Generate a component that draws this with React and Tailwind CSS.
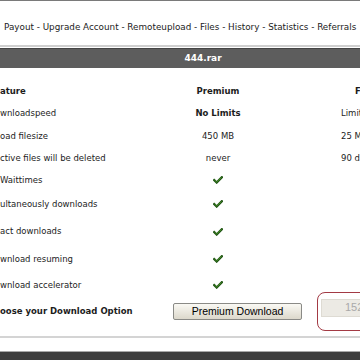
import React from "react";

const rows = [
  { label: "wnloadspeed", h: "h-[23px]", premium: "No Limits", bold: true, free: "Limited" },
  { label: "oad filesize", h: "h-[23px]", premium: "450 MB", free: "25 MB" },
  { label: "ctive files will be deleted", h: "h-[21px]", premium: "never", free: "90 days" },
  { label: "Waittimes", h: "h-[22px]", check: true },
  { label: "ultaneously downloads", h: "h-[26px]", check: true },
  { label: "act downloads", h: "h-[29px]", check: true },
  { label: "wnload resuming", h: "h-[26px]", check: true },
  { label: "wnload accelerator", h: "h-[26px]", check: true },
];

function Check() {
  return (
    <svg width="10" height="8" viewBox="0 0 11 9">
      <path d="M1.2 4.6 L4 7.3 L9.8 1.4" fill="none" stroke="#1d5212" strokeWidth="2.6" strokeLinecap="square" />
      <path d="M1.6 4.6 L4 6.8 L9.5 1.5" fill="none" stroke="#4f9a2c" strokeWidth="1" />
    </svg>
  );
}

export default function App() {
  return (
    <div className="w-[360px] h-[360px] overflow-hidden bg-white font-['DejaVu_Sans',sans-serif] text-[#1c1c1c]">
      <div className="h-px bg-[#7a7a7a]" />

      {/* top menu */}
      <div className="h-[44px] flex items-center pl-[4px] pt-[9px] text-[8.8px] whitespace-nowrap">
        Payout - Upgrade Account - Remoteupload - Files - History - Statistics - Referrals
      </div>
      <div className="h-[2px] bg-[#cfcfcf]" />
      <div className="h-px" />

      <div className="ml-[-16px] w-[438px]">
        <div className="h-[20px] bg-[#5d5d5d] border-t border-[#444] flex items-center justify-center text-white font-bold text-[9px]">
          444.rar
        </div>

        <div className="h-[12px]" />

        {/* header row */}
        <div className="grid grid-cols-[184px_100px_184px] h-[22px] items-center text-[8.5px] font-bold">
          <div className="pl-[16px]">ature</div>
          <div className="text-center">Premium</div>
          <div className="pl-[87px]">Free</div>
        </div>

        {rows.map((r) => (
          <div key={r.label} className={`grid grid-cols-[184px_100px_184px] items-center text-[8.5px] ${r.h}`}>
            <div className="pl-[16px] whitespace-nowrap">{r.label}</div>
            <div className={`flex justify-center ${r.bold ? "font-bold" : ""}`}>
              {r.check ? <Check /> : r.premium}
            </div>
            <div className="pl-[73px] whitespace-nowrap">{r.free}</div>
          </div>
        ))}

        {/* download option row */}
        <div className="grid grid-cols-[184px_100px_184px] grid-rows-[26px] items-center h-[26px] text-[8.5px]">
          <div className="pl-[16px] font-bold whitespace-nowrap">oose your Download Option</div>
          <div className="flex">
            <button className="ml-[5px] w-[129px] h-[17px] shrink-0 border border-[#8a8a86] rounded-[2px] bg-gradient-to-b from-[#faf9f4] to-[#dcd8cb] font-['Liberation_Sans',sans-serif] text-[10.5px] text-black leading-none">
              Premium Download
            </button>
          </div>
          <div className="pl-[49px] self-center">
            <div className="w-[110px] h-[39px] my-[-7px] border border-[#a33a44] rounded-[8px] pt-[6px] pl-[3px]">
              <div className="h-[18px] w-[100px] bg-[#eceae4] border border-[#dedbd3] pl-[23px] flex items-center font-['Liberation_Sans',sans-serif] text-[11px] text-[#a9a9a9]">
                152
              </div>
            </div>
          </div>
        </div>
      </div>

      <div className="h-[12px]" />
      <div className="h-[2px] bg-[#d4d4d4]" />
      <div className="h-[13px]" />
      <div className="h-px bg-[#a8a8a8]" />
      <div className="h-[10px] bg-[#3d3d3d]" />
    </div>
  );
}
